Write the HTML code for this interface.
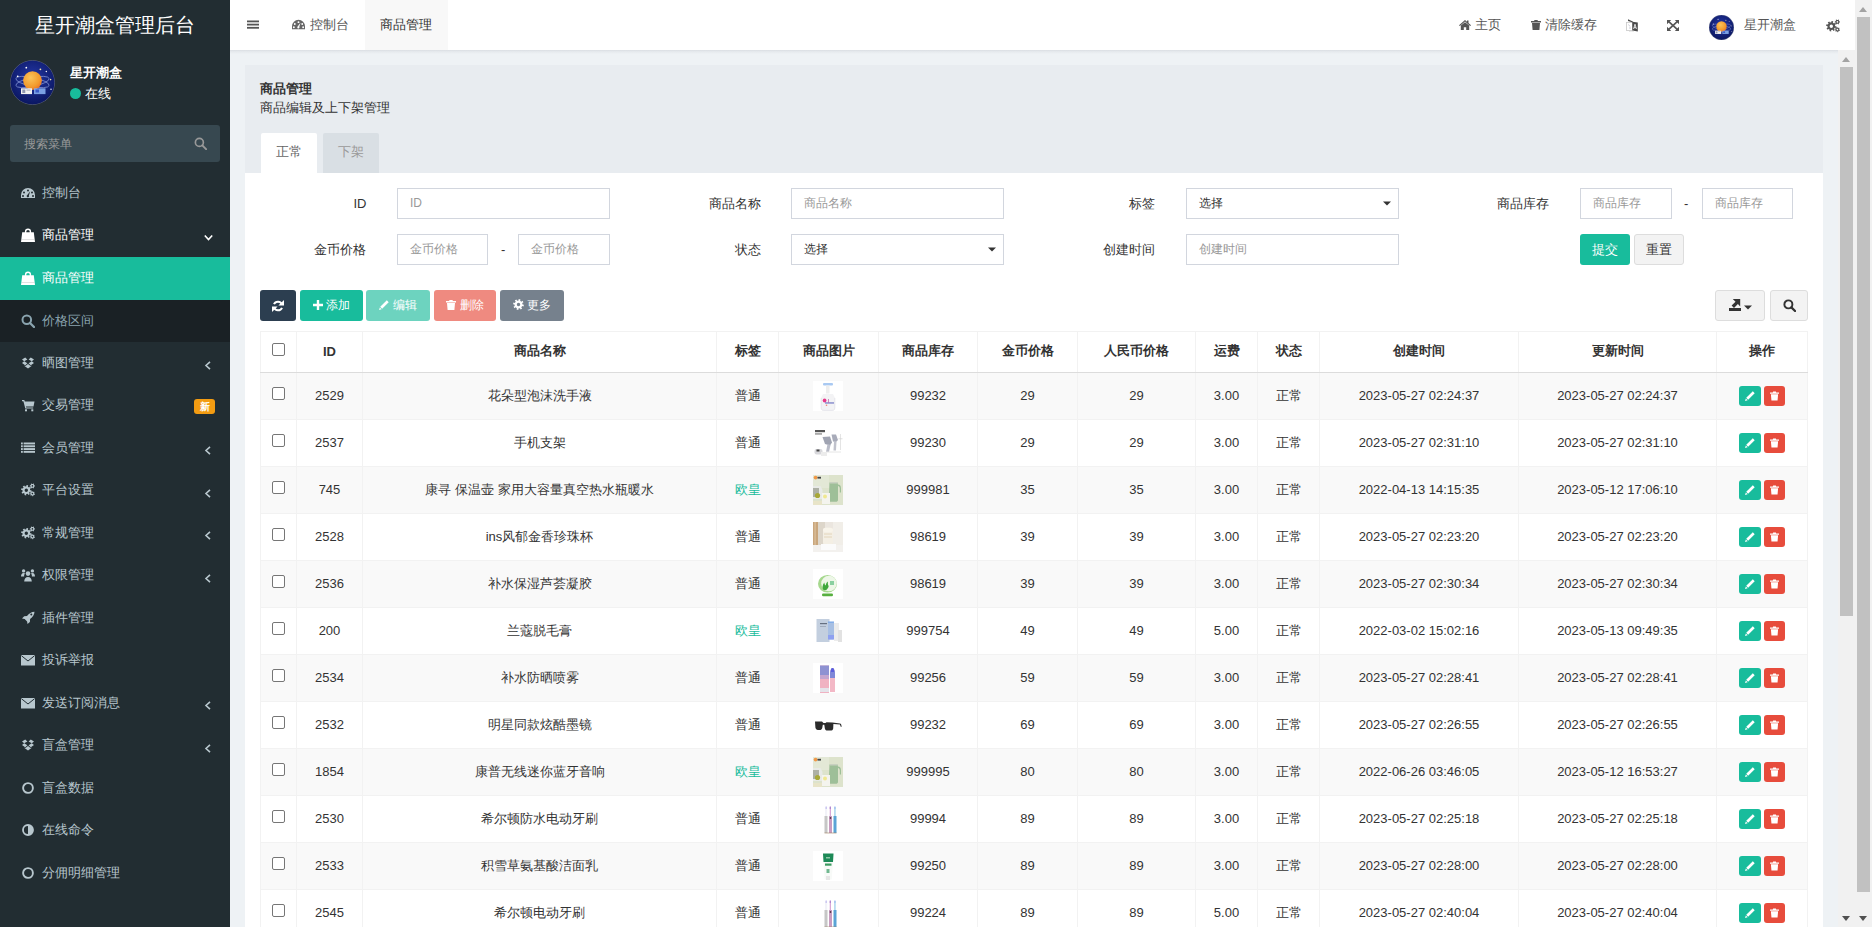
<!DOCTYPE html><html><head><meta charset="utf-8"><title>商品管理</title><style>
*{box-sizing:border-box;margin:0;padding:0}
html,body{width:1872px;height:927px;overflow:hidden}
body{font-family:"Liberation Sans",sans-serif;font-size:13px;color:#333;background:#ecf0f5;position:relative}
.abs{position:absolute}
svg{display:block}
/* sidebar */
#sb{position:absolute;left:0;top:0;width:230px;height:927px;background:#222d32;overflow:hidden}
#logo{position:absolute;left:0;top:0;width:230px;height:50px;line-height:50px;text-align:center;color:#fff;font-size:20px}
#avatar{position:absolute;left:10px;top:60px;width:45px;height:45px;border-radius:50%;overflow:hidden}
#uname{position:absolute;left:70px;top:63.5px;color:#fff;font-weight:bold;font-size:13px;line-height:18px}
#ustat{position:absolute;left:70px;top:85px;color:#fff;font-size:13px;line-height:18px}
#ustat i{display:inline-block;width:11px;height:11px;border-radius:50%;background:#18bc9c;vertical-align:-1px;margin-right:4px}
#sbsearch{position:absolute;left:10px;top:125px;width:210px;height:37px;background:#374850;border-radius:3px}
#sbsearch span{position:absolute;left:14px;top:1px;line-height:37px;font-size:12px;color:#9a9a9a}
.mi{position:absolute;left:0;width:230px;height:42.5px;color:#b8c7ce}
.mi .ic{position:absolute;left:21px;top:14px;width:14px;height:14px}
.mi .tx{position:absolute;left:42px;top:0;line-height:42.5px;font-size:13px;font-weight:500}
.mi .ar{position:absolute;left:204px;top:19.5px;width:8px;height:9px}
/* header */
#hd{position:absolute;left:230px;top:0;width:1625px;height:50px;background:#fff}
#hdsh{position:absolute;left:230px;top:50px;width:1608px;height:4px;background:linear-gradient(#d9dde2,rgba(217,221,226,.5) 30%,rgba(238,242,245,0))}
.hx{position:absolute;top:0;line-height:50px;font-size:13px;color:#555}
/* content */
#ct{position:absolute;left:230px;top:50px;width:1608px;height:877px;background:#eef2f5;overflow:hidden}
#panel{position:absolute;left:15px;top:15px;width:1578px;height:1000px;background:#fff}
#ph{position:absolute;left:0;top:0;width:1578px;height:108px;background:#e8ecf0}
.tab{position:absolute;top:68px;height:40px;width:56px;line-height:38px;text-align:center;border-radius:2px 2px 0 0}
.lbl{position:absolute;line-height:31px;text-align:right;color:#333;font-size:13px}
.inp{position:absolute;height:31px;border:1px solid #d2d6de;background:#fff;line-height:29px;padding-left:12px;font-size:12px;color:#999}
.dash{position:absolute;line-height:31px;color:#333}
.btn{position:absolute;height:31px;border-radius:3px;color:#fff;font-size:12px;line-height:31px;text-align:center;font-weight:500}
.btn svg{display:inline-block;vertical-align:-1px}
.btn .abs{line-height:0}
.btn .abs svg{display:block}
/* table */
#tbl{position:absolute;left:15px;top:266px;border-collapse:collapse;table-layout:fixed}
#tbl th,#tbl td{border:1px solid #f2f2f2;text-align:center;vertical-align:middle;padding:0;overflow:hidden;white-space:nowrap}
#tbl th{height:41px;padding-bottom:2px;font-weight:bold;color:#333;background:#fff;border-bottom:1px solid #dcdcdc}
#tbl td{height:47px;color:#333;padding-bottom:2px}
#tbl tr.s td{background:#f9f9f9}
.cb{display:inline-block;width:13px;height:13px;border:1px solid #767676;border-radius:2px;background:#fff;vertical-align:middle;position:relative;top:-3px}
#tbl td .cb{top:-3px}
.op{display:inline-block;width:22px;height:20px;border-radius:3px;vertical-align:middle;position:relative;top:1px}

.cj{position:relative;top:1px}
.thumb{display:inline-block;width:30px;height:30px;vertical-align:middle;position:relative;top:1px;left:-1px}
/* scrollbars */
.sbar{position:absolute;top:0;width:17px;background:#f1f1f1}
.sthumb{position:absolute;left:2px;width:13px;background:#c1c1c1}
</style></head><body><div id="sb"><div id="logo">星开潮盒管理后台</div><div id="avatar"><svg width="45" height="45" viewBox="0 0 45 45" ><defs><radialGradient id="ag45" cx="50%" cy="40%" r="60%"><stop offset="0" stop-color="#2538a8"/><stop offset="1" stop-color="#0a1660"/></radialGradient><radialGradient id="pg45" cx="40%" cy="35%" r="70%"><stop offset="0" stop-color="#fbc45a"/><stop offset=".7" stop-color="#f39a2c"/><stop offset="1" stop-color="#e8702a"/></radialGradient></defs>
<circle cx="22.5" cy="22.5" r="22.3" fill="url(#ag45)" stroke="#7a8090" stroke-width=".6"/>
<ellipse cx="22.5" cy="22" rx="17" ry="4.5" fill="none" stroke="#8a9ad8" stroke-width=".7" transform="rotate(-12 22.5 22)"/>
<ellipse cx="22.5" cy="22" rx="17" ry="4.5" fill="none" stroke="#8a9ad8" stroke-width=".7" transform="rotate(12 22.5 22)"/>
<circle cx="22.5" cy="20.6" r="9.4" fill="url(#pg45)"/>
<rect x="11" y="28.3" width="11" height="5.8" fill="#f2f2f2"/><rect x="12.3" y="29.5" width="3" height="3.5" fill="#9098b0"/><rect x="16.5" y="29.5" width="4" height="1.2" fill="#b0b4c4"/>
<rect x="24" y="28.3" width="11.5" height="5.8" fill="#86aef0" opacity=".9"/><rect x="25.5" y="29.5" width="3.5" height="3" fill="#3a5ac8"/>
<circle cx="16.3" cy="7.7" r=".9" fill="#fff"/><circle cx="30.4" cy="9.3" r=".9" fill="#f0e0a0"/><circle cx="36.3" cy="11.5" r=".7" fill="#fff"/><circle cx="7.7" cy="16.3" r=".9" fill="#fff"/><circle cx="40.6" cy="19.6" r=".8" fill="#f0e0a0"/><circle cx="41" cy="29.3" r=".7" fill="#fff"/></svg></div><div id="uname">星开潮盒</div><div id="ustat"><i></i>在线</div><div id="sbsearch"><span>搜索菜单</span><div class="abs" style="left:184px;top:12px"><svg width="13" height="13" viewBox="0 0 14 14" ><circle cx="5.8" cy="5.8" r="4.3" fill="none" stroke="#999" stroke-width="1.8"/><path d="M9 9l4 4" stroke="#999" stroke-width="2.1" stroke-linecap="round"/></svg></div></div><div class="mi" style="top:171.5px;color:#b8c7ce"><div class="ic"><svg width="14" height="14" viewBox="0 0 14 14" ><path fill="#b8c7ce" d="M7 2A7 7 0 0 0 0 9v3h14V9A7 7 0 0 0 7 2zM7 3.5a1 1 0 1 1 0 2 1 1 0 0 1 0-2zM3 5.5a1 1 0 1 1 0 2 1 1 0 0 1 0-2zM11 5.5a1 1 0 1 1 0 2 1 1 0 0 1 0-2zM2 9a1 1 0 1 1 0 2 1 1 0 0 1 0-2zM12 9a1 1 0 1 1 0 2 1 1 0 0 1 0-2zM9.2 5.2 7.9 9.4a1.2 1.2 0 1 1-1.6-.4z"/></svg></div><div class="tx">控制台</div></div><div class="mi" style="top:214.0px;color:#fff"><div class="ic"><svg width="14" height="14" viewBox="0 0 14 14" ><path fill="#fff" d="M1.2 4.3h11.6L14 14H0z"/><path fill="none" stroke="#fff" stroke-width="1.4" d="M4.6 6.5V3.6a2.4 2.4 0 0 1 4.8 0v2.9"/><path d="M.6 11.6h12.8" stroke="#999" stroke-width=".5" opacity=".6"/></svg></div><div class="tx">商品管理</div><div class="ar" style="left:204px;top:20px"><svg width="9" height="8" viewBox="0 0 9 8" ><path d="M0.8 1.5 4.5 5.5 8.2 1.5" fill="none" stroke="#fff" stroke-width="1.6"/></svg></div></div><div class="mi" style="top:256.5px;background:#18bc9c;height:43.5px;color:#fff"><div class="ic"><svg width="14" height="14" viewBox="0 0 14 14" ><path fill="#fff" d="M1.2 4.3h11.6L14 14H0z"/><path fill="none" stroke="#fff" stroke-width="1.4" d="M4.6 6.5V3.6a2.4 2.4 0 0 1 4.8 0v2.9"/><path d="M.6 11.6h12.8" stroke="#999" stroke-width=".5" opacity=".6"/></svg></div><div class="tx">商品管理</div></div><div class="mi" style="top:299.0px;background:#1a2125;top:300px;height:42px;color:#8aa4af"><div class="ic"><svg width="14" height="14" viewBox="0 0 14 14" ><circle cx="5.8" cy="5.8" r="4.3" fill="none" stroke="#8aa4af" stroke-width="2"/><path d="M9 9l4 4" stroke="#8aa4af" stroke-width="2.3" stroke-linecap="round"/></svg></div><div class="tx">价格区间</div></div><div class="mi" style="top:341.5px;color:#b8c7ce"><div class="ic"><svg width="14" height="14" viewBox="0 0 14 14" ><path fill="#b8c7ce" d="M4.2 1.5 1 3.6 3.2 5.3 6.4 3.4zM9.8 1.5 13 3.6 10.8 5.3 7.6 3.4zM1 7.1l3.2 2.1L6.4 7.3 3.2 5.3zM13 7.1l-3.2 2.1L7.6 7.3l3.2-2zM7 8l-2.6 2 -.9-.5v.6L7 12.5l3.5-2.4v-.6l-.9.5z"/></svg></div><div class="tx">晒图管理</div><div class="ar"><svg width="8" height="9" viewBox="0 0 8 9" ><path d="M6 0.8 2 4.5 6 8.2" fill="none" stroke="#b8c7ce" stroke-width="1.6"/></svg></div></div><div class="mi" style="top:384.0px;color:#b8c7ce"><div class="ic"><svg width="14" height="14" viewBox="0 0 14 14" ><path fill="#b8c7ce" d="M1 2h2.3l.5 1.4H13.5l-1 5H4.9l.3 1H12.2v1.2H4.3L2.4 3.2H1z"/><rect x="4" y="11.3" width="2" height="2" fill="#b8c7ce"/><rect x="10.3" y="11.3" width="2" height="2" fill="#b8c7ce"/></svg></div><div class="tx">交易管理</div><div class="abs" style="left:194px;top:14.5px;width:21px;height:15px;background:#f39c12;border-radius:3px;color:#fff;font-size:10px;font-weight:bold;line-height:15px;text-align:center">新</div></div><div class="mi" style="top:426.5px;color:#b8c7ce"><div class="ic"><svg width="14" height="14" viewBox="0 0 14 14" ><rect x="0" y="1.5" width="1.8" height="1.9" fill="#b8c7ce"/><rect x="2.6" y="1.5" width="11.4" height="1.9" fill="#b8c7ce"/><rect x="0" y="4.3" width="1.8" height="1.9" fill="#b8c7ce"/><rect x="2.6" y="4.3" width="11.4" height="1.9" fill="#b8c7ce"/><rect x="0" y="7.1" width="1.8" height="1.9" fill="#b8c7ce"/><rect x="2.6" y="7.1" width="11.4" height="1.9" fill="#b8c7ce"/><rect x="0" y="9.9" width="1.8" height="1.9" fill="#b8c7ce"/><rect x="2.6" y="9.9" width="11.4" height="1.9" fill="#b8c7ce"/></svg></div><div class="tx">会员管理</div><div class="ar"><svg width="8" height="9" viewBox="0 0 8 9" ><path d="M6 0.8 2 4.5 6 8.2" fill="none" stroke="#b8c7ce" stroke-width="1.6"/></svg></div></div><div class="mi" style="top:469.0px;color:#b8c7ce"><div class="ic"><svg width="14" height="14" viewBox="0 0 14 14" ><path fill="#b8c7ce" fill-rule="evenodd" d="M10.50 7.32 L10.14 9.11 L8.87 8.78 L7.99 10.02 L8.89 10.96 L7.37 11.97 L6.71 10.84 L5.21 11.10 L5.18 12.40 L3.39 12.04 L3.72 10.77 L2.48 9.89 L1.54 10.79 L0.53 9.27 L1.66 8.61 L1.40 7.11 L0.10 7.08 L0.46 5.29 L1.73 5.62 L2.61 4.38 L1.71 3.44 L3.23 2.43 L3.89 3.56 L5.39 3.30 L5.42 2.00 L7.21 2.36 L6.88 3.63 L8.12 4.51 L9.06 3.61 L10.07 5.13 L8.94 5.79 L9.20 7.29ZM7.00 7.20A1.7 1.7 0 1 0 3.60 7.20A1.7 1.7 0 1 0 7.00 7.20ZM13.93 2.29 L13.93 3.51 L13.22 3.44 L12.71 4.28 L13.19 4.79 L12.14 5.39 L11.84 4.75 L10.86 4.72 L10.66 5.39 L9.61 4.79 L10.02 4.21 L9.55 3.34 L8.87 3.51 L8.87 2.29 L9.58 2.36 L10.09 1.52 L9.61 1.01 L10.66 0.41 L10.96 1.05 L11.94 1.08 L12.14 0.41 L13.19 1.01 L12.78 1.59 L13.25 2.46ZM12.20 2.90A0.8 0.8 0 1 0 10.60 2.90A0.8 0.8 0 1 0 12.20 2.90ZM13.99 10.77 L13.64 11.93 L12.98 11.65 L12.24 12.30 L12.55 12.93 L11.37 13.20 L11.28 12.50 L10.35 12.18 L9.96 12.76 L9.13 11.87 L9.70 11.44 L9.50 10.48 L8.81 10.43 L9.16 9.27 L9.82 9.55 L10.56 8.90 L10.25 8.27 L11.43 8.00 L11.52 8.70 L12.45 9.02 L12.84 8.44 L13.67 9.33 L13.10 9.76 L13.30 10.72ZM12.20 10.60A0.8 0.8 0 1 0 10.60 10.60A0.8 0.8 0 1 0 12.20 10.60Z"/></svg></div><div class="tx">平台设置</div><div class="ar"><svg width="8" height="9" viewBox="0 0 8 9" ><path d="M6 0.8 2 4.5 6 8.2" fill="none" stroke="#b8c7ce" stroke-width="1.6"/></svg></div></div><div class="mi" style="top:511.5px;color:#b8c7ce"><div class="ic"><svg width="14" height="14" viewBox="0 0 14 14" ><path fill="#b8c7ce" fill-rule="evenodd" d="M10.50 7.32 L10.14 9.11 L8.87 8.78 L7.99 10.02 L8.89 10.96 L7.37 11.97 L6.71 10.84 L5.21 11.10 L5.18 12.40 L3.39 12.04 L3.72 10.77 L2.48 9.89 L1.54 10.79 L0.53 9.27 L1.66 8.61 L1.40 7.11 L0.10 7.08 L0.46 5.29 L1.73 5.62 L2.61 4.38 L1.71 3.44 L3.23 2.43 L3.89 3.56 L5.39 3.30 L5.42 2.00 L7.21 2.36 L6.88 3.63 L8.12 4.51 L9.06 3.61 L10.07 5.13 L8.94 5.79 L9.20 7.29ZM7.00 7.20A1.7 1.7 0 1 0 3.60 7.20A1.7 1.7 0 1 0 7.00 7.20ZM13.93 2.29 L13.93 3.51 L13.22 3.44 L12.71 4.28 L13.19 4.79 L12.14 5.39 L11.84 4.75 L10.86 4.72 L10.66 5.39 L9.61 4.79 L10.02 4.21 L9.55 3.34 L8.87 3.51 L8.87 2.29 L9.58 2.36 L10.09 1.52 L9.61 1.01 L10.66 0.41 L10.96 1.05 L11.94 1.08 L12.14 0.41 L13.19 1.01 L12.78 1.59 L13.25 2.46ZM12.20 2.90A0.8 0.8 0 1 0 10.60 2.90A0.8 0.8 0 1 0 12.20 2.90ZM13.99 10.77 L13.64 11.93 L12.98 11.65 L12.24 12.30 L12.55 12.93 L11.37 13.20 L11.28 12.50 L10.35 12.18 L9.96 12.76 L9.13 11.87 L9.70 11.44 L9.50 10.48 L8.81 10.43 L9.16 9.27 L9.82 9.55 L10.56 8.90 L10.25 8.27 L11.43 8.00 L11.52 8.70 L12.45 9.02 L12.84 8.44 L13.67 9.33 L13.10 9.76 L13.30 10.72ZM12.20 10.60A0.8 0.8 0 1 0 10.60 10.60A0.8 0.8 0 1 0 12.20 10.60Z"/></svg></div><div class="tx">常规管理</div><div class="ar"><svg width="8" height="9" viewBox="0 0 8 9" ><path d="M6 0.8 2 4.5 6 8.2" fill="none" stroke="#b8c7ce" stroke-width="1.6"/></svg></div></div><div class="mi" style="top:554.0px;color:#b8c7ce"><div class="ic"><svg width="14" height="14" viewBox="0 0 14 14" ><circle cx="7" cy="5.6" r="2.3" fill="#b8c7ce"/><path fill="#b8c7ce" d="M3.2 13.5c0-2.9 1.5-4.6 3.8-4.6s3.8 1.7 3.8 4.6z"/><circle cx="2.6" cy="2.9" r="1.7" fill="#b8c7ce"/><circle cx="11.4" cy="2.9" r="1.7" fill="#b8c7ce"/><path fill="#b8c7ce" d="M0 8.6c0-2 .8-3.6 2.6-3.6.6 0 1.1.2 1.5.5-.6.5-1 1.3-1 2.3 0 .3 0 .6.1.8z M14 8.6c0-2-.8-3.6-2.6-3.6-.6 0-1.1.2-1.5.5.6.5 1 1.3 1 2.3 0 .3 0 .6-.1.8z"/></svg></div><div class="tx">权限管理</div><div class="ar"><svg width="8" height="9" viewBox="0 0 8 9" ><path d="M6 0.8 2 4.5 6 8.2" fill="none" stroke="#b8c7ce" stroke-width="1.6"/></svg></div></div><div class="mi" style="top:596.5px;color:#b8c7ce"><div class="ic"><svg width="14" height="14" viewBox="0 0 14 14" ><path fill="#b8c7ce" d="M13.5.8C10.5.9 8 2.4 6 5L3.2 5.2 1 7.6l2.7.4 2.4 2.4.4 2.7 2.4-2.2.2-2.8c2.6-2 4.3-4.6 4.4-7.3zM10.3 2.6a1 1 0 1 1 0 2 1 1 0 0 1 0-2z"/></svg></div><div class="tx">插件管理</div></div><div class="mi" style="top:639.0px;color:#b8c7ce"><div class="ic"><svg width="14" height="14" viewBox="0 0 14 14" ><rect x="0" y="2" width="14" height="10.5" fill="#b8c7ce"/><path d="M0.3 2.6 7 8 13.7 2.6" fill="none" stroke="#222d32" stroke-width="1"/></svg></div><div class="tx">投诉举报</div></div><div class="mi" style="top:681.5px;color:#b8c7ce"><div class="ic"><svg width="14" height="14" viewBox="0 0 14 14" ><rect x="0" y="2" width="14" height="10.5" fill="#b8c7ce"/><path d="M0.3 2.6 7 8 13.7 2.6" fill="none" stroke="#222d32" stroke-width="1"/></svg></div><div class="tx">发送订阅消息</div><div class="ar"><svg width="8" height="9" viewBox="0 0 8 9" ><path d="M6 0.8 2 4.5 6 8.2" fill="none" stroke="#b8c7ce" stroke-width="1.6"/></svg></div></div><div class="mi" style="top:724.0px;color:#b8c7ce"><div class="ic"><svg width="14" height="14" viewBox="0 0 14 14" ><path fill="#b8c7ce" d="M4.2 1.5 1 3.6 3.2 5.3 6.4 3.4zM9.8 1.5 13 3.6 10.8 5.3 7.6 3.4zM1 7.1l3.2 2.1L6.4 7.3 3.2 5.3zM13 7.1l-3.2 2.1L7.6 7.3l3.2-2zM7 8l-2.6 2 -.9-.5v.6L7 12.5l3.5-2.4v-.6l-.9.5z"/></svg></div><div class="tx">盲盒管理</div><div class="ar"><svg width="8" height="9" viewBox="0 0 8 9" ><path d="M6 0.8 2 4.5 6 8.2" fill="none" stroke="#b8c7ce" stroke-width="1.6"/></svg></div></div><div class="mi" style="top:766.5px;color:#b8c7ce"><div class="ic"><svg width="14" height="14" viewBox="0 0 14 14" ><circle cx="7" cy="7" r="4.9" fill="none" stroke="#b8c7ce" stroke-width="1.9"/></svg></div><div class="tx">盲盒数据</div></div><div class="mi" style="top:809.0px;color:#b8c7ce"><div class="ic"><svg width="14" height="14" viewBox="0 0 14 14" ><circle cx="7" cy="7" r="5" fill="none" stroke="#b8c7ce" stroke-width="1.8"/><path fill="#b8c7ce" d="M7 2a5 5 0 0 1 0 10z"/></svg></div><div class="tx">在线命令</div></div><div class="mi" style="top:851.5px;color:#b8c7ce"><div class="ic"><svg width="14" height="14" viewBox="0 0 14 14" ><circle cx="7" cy="7" r="4.9" fill="none" stroke="#b8c7ce" stroke-width="1.9"/></svg></div><div class="tx">分佣明细管理</div></div></div><div id="hd"><div class="abs" style="left:17px;top:20px"><svg width="12" height="9" viewBox="0 0 12 9" ><rect y="0.5" width="12" height="1.8" fill="#555"/><rect y="3.7" width="12" height="1.8" fill="#555"/><rect y="6.9" width="12" height="1.8" fill="#555"/></svg></div><div class="abs" style="left:62px;top:18px"><svg width="13" height="13" viewBox="0 0 14 14" ><path fill="#666" d="M7 2A7 7 0 0 0 0 9v3h14V9A7 7 0 0 0 7 2zM7 3.5a1 1 0 1 1 0 2 1 1 0 0 1 0-2zM3 5.5a1 1 0 1 1 0 2 1 1 0 0 1 0-2zM11 5.5a1 1 0 1 1 0 2 1 1 0 0 1 0-2zM2 9a1 1 0 1 1 0 2 1 1 0 0 1 0-2zM12 9a1 1 0 1 1 0 2 1 1 0 0 1 0-2zM9.2 5.2 7.9 9.4a1.2 1.2 0 1 1-1.6-.4z"/></svg></div><div class="hx" style="left:80px;color:#555">控制台</div><div class="abs" style="left:135px;top:0;width:83px;height:50px;background:#f8f8f8"></div><div class="hx" style="left:150px;color:#333">商品管理</div><div class="abs" style="left:1229px;top:20px"><svg width="12" height="10" viewBox="0 0 12 10" ><path fill="#555" d="M6 0 0 5.2l.8.8L6 1.6 11.2 6l.8-.8L9.5 3V.5H8v1.3z M1.8 5.6V10h3V7.2h2.4V10h3V5.6L6 2.2z"/></svg></div><div class="hx" style="left:1245px">主页</div><div class="abs" style="left:1301px;top:20px"><svg width="10" height="10" viewBox="0 0 10 10" ><path fill="#555" d="M3.5 0h3l.4 1H10v1.4H0V1h3.1zM1 3h8l-.6 7H1.6z"/><path stroke="#fff" stroke-width=".7" opacity=".0" d="M3.5 4.5v4M6.5 4.5v4"/></svg></div><div class="hx" style="left:1315px">清除缓存</div><div class="abs" style="left:1396px;top:19px"><svg width="12" height="13" viewBox="0 0 12 13" ><rect x="0.5" y="3.5" width="6" height="8" fill="#fff" stroke="#c8c8c8" stroke-width=".8"/><path d="M2 .3 6.8 2.6V3.6L2 2z" fill="#4a4a4a"/><path d="M6.3 2.8 11.8 3.6V12.4L6.3 11.4z" fill="#4a4a4a"/><path d="M7.6 10 9 5.2 10.4 10M8.1 8.6h1.8" fill="none" stroke="#fff" stroke-width=".8"/><path d="M2.5 5.5 4 7.5M3 9h2" stroke="#aab" stroke-width=".6"/><path d="M3 12.5c1.5.5 3.5.5 5-.5" fill="none" stroke="#ccc" stroke-width=".6"/></svg></div><div class="abs" style="left:1437px;top:20px"><svg width="12" height="11" viewBox="0 0 12 11" ><path fill="#555" d="M0 0h4.2L0 4.2zM12 0v4.2L7.8 0zM0 11V6.8L4.2 11zM12 11H7.8L12 6.8z"/><path d="M1.2 1.1 10.8 9.9M10.8 1.1 1.2 9.9" stroke="#555" stroke-width="1.7"/></svg></div><div class="abs" style="left:1479px;top:15px;width:25px;height:25px"><svg width="25" height="25" viewBox="0 0 45 45" ><defs><radialGradient id="ag25" cx="50%" cy="40%" r="60%"><stop offset="0" stop-color="#2538a8"/><stop offset="1" stop-color="#0a1660"/></radialGradient><radialGradient id="pg25" cx="40%" cy="35%" r="70%"><stop offset="0" stop-color="#fbc45a"/><stop offset=".7" stop-color="#f39a2c"/><stop offset="1" stop-color="#e8702a"/></radialGradient></defs>
<circle cx="22.5" cy="22.5" r="22.3" fill="url(#ag25)" stroke="#7a8090" stroke-width=".6"/>
<ellipse cx="22.5" cy="22" rx="17" ry="4.5" fill="none" stroke="#8a9ad8" stroke-width=".7" transform="rotate(-12 22.5 22)"/>
<ellipse cx="22.5" cy="22" rx="17" ry="4.5" fill="none" stroke="#8a9ad8" stroke-width=".7" transform="rotate(12 22.5 22)"/>
<circle cx="22.5" cy="20.6" r="9.4" fill="url(#pg25)"/>
<rect x="11" y="28.3" width="11" height="5.8" fill="#f2f2f2"/><rect x="12.3" y="29.5" width="3" height="3.5" fill="#9098b0"/><rect x="16.5" y="29.5" width="4" height="1.2" fill="#b0b4c4"/>
<rect x="24" y="28.3" width="11.5" height="5.8" fill="#86aef0" opacity=".9"/><rect x="25.5" y="29.5" width="3.5" height="3" fill="#3a5ac8"/>
<circle cx="16.3" cy="7.7" r=".9" fill="#fff"/><circle cx="30.4" cy="9.3" r=".9" fill="#f0e0a0"/><circle cx="36.3" cy="11.5" r=".7" fill="#fff"/><circle cx="7.7" cy="16.3" r=".9" fill="#fff"/><circle cx="40.6" cy="19.6" r=".8" fill="#f0e0a0"/><circle cx="41" cy="29.3" r=".7" fill="#fff"/></svg></div><div class="hx" style="left:1514px">星开潮盒</div><div class="abs" style="left:1596px;top:19px"><svg width="14" height="14" viewBox="0 0 14 14" ><path fill="#555" fill-rule="evenodd" d="M10.50 7.32 L10.14 9.11 L8.87 8.78 L7.99 10.02 L8.89 10.96 L7.37 11.97 L6.71 10.84 L5.21 11.10 L5.18 12.40 L3.39 12.04 L3.72 10.77 L2.48 9.89 L1.54 10.79 L0.53 9.27 L1.66 8.61 L1.40 7.11 L0.10 7.08 L0.46 5.29 L1.73 5.62 L2.61 4.38 L1.71 3.44 L3.23 2.43 L3.89 3.56 L5.39 3.30 L5.42 2.00 L7.21 2.36 L6.88 3.63 L8.12 4.51 L9.06 3.61 L10.07 5.13 L8.94 5.79 L9.20 7.29ZM7.00 7.20A1.7 1.7 0 1 0 3.60 7.20A1.7 1.7 0 1 0 7.00 7.20ZM13.93 2.29 L13.93 3.51 L13.22 3.44 L12.71 4.28 L13.19 4.79 L12.14 5.39 L11.84 4.75 L10.86 4.72 L10.66 5.39 L9.61 4.79 L10.02 4.21 L9.55 3.34 L8.87 3.51 L8.87 2.29 L9.58 2.36 L10.09 1.52 L9.61 1.01 L10.66 0.41 L10.96 1.05 L11.94 1.08 L12.14 0.41 L13.19 1.01 L12.78 1.59 L13.25 2.46ZM12.20 2.90A0.8 0.8 0 1 0 10.60 2.90A0.8 0.8 0 1 0 12.20 2.90ZM13.99 10.77 L13.64 11.93 L12.98 11.65 L12.24 12.30 L12.55 12.93 L11.37 13.20 L11.28 12.50 L10.35 12.18 L9.96 12.76 L9.13 11.87 L9.70 11.44 L9.50 10.48 L8.81 10.43 L9.16 9.27 L9.82 9.55 L10.56 8.90 L10.25 8.27 L11.43 8.00 L11.52 8.70 L12.45 9.02 L12.84 8.44 L13.67 9.33 L13.10 9.76 L13.30 10.72ZM12.20 10.60A0.8 0.8 0 1 0 10.60 10.60A0.8 0.8 0 1 0 12.20 10.60Z"/></svg></div></div><div id="ct"><div id="panel"><div id="ph"><div class="abs" style="left:15px;top:15px;font-weight:bold;line-height:18px">商品管理</div><div class="abs" style="left:15px;top:33.5px;line-height:18px">商品编辑及上下架管理</div><div class="tab" style="left:16px;background:#fff;color:#666">正常</div><div class="tab" style="left:78px;background:#d9dfe4;color:#999">下架</div></div><div class="lbl" style="left:15.0px;top:123px;width:106.4px">ID</div><div class="inp" style="left:152px;top:123px;width:213px;color:#999">ID</div><div class="lbl" style="left:15.0px;top:169px;width:106.4px">金币价格</div><div class="inp" style="left:152px;top:169px;width:91px;color:#999">金币价格</div><div class="dash" style="left:256px;top:169px">-</div><div class="inp" style="left:273px;top:169px;width:92px;color:#999">金币价格</div><div class="lbl" style="left:409.25px;top:123px;width:106.4px">商品名称</div><div class="inp" style="left:546px;top:123px;width:213px;color:#999">商品名称</div><div class="lbl" style="left:409.25px;top:169px;width:106.4px">状态</div><div class="inp" style="left:546px;top:169px;width:213px;color:#333">选择<div class="abs" style="right:7px;top:12px;line-height:0"><svg width="8" height="5" viewBox="0 0 8 5" ><path d="M0 0.5h8L4 4.5z" fill="#333"/></svg></div></div><div class="lbl" style="left:803.5px;top:123px;width:106.4px">标签</div><div class="inp" style="left:941px;top:123px;width:213px;color:#333">选择<div class="abs" style="right:7px;top:12px;line-height:0"><svg width="8" height="5" viewBox="0 0 8 5" ><path d="M0 0.5h8L4 4.5z" fill="#333"/></svg></div></div><div class="lbl" style="left:803.5px;top:169px;width:106.4px">创建时间</div><div class="inp" style="left:941px;top:169px;width:213px;color:#999">创建时间</div><div class="lbl" style="left:1197.75px;top:123px;width:106.4px">商品库存</div><div class="inp" style="left:1335px;top:123px;width:92px;color:#999">商品库存</div><div class="dash" style="left:1439px;top:123px">-</div><div class="inp" style="left:1457px;top:123px;width:91px;color:#999">商品库存</div><div class="btn" style="left:1335px;top:169px;width:50px;background:#18bc9c;font-size:13px">提交</div><div class="btn" style="left:1389px;top:169px;width:50px;background:#f3f3f3;border:1px solid #ddd;color:#333;font-size:13px;line-height:29px">重置</div><div class="btn" style="left:15px;top:225px;width:36px;background:#2c3e50"><div class="abs" style="left:12px;top:10px"><svg width="12" height="12" viewBox="0 0 12 12" ><path fill="none" stroke="#fff" stroke-width="2" d="M10 4.6A4.3 4.3 0 0 0 2 4.2M2 7.4A4.3 4.3 0 0 0 10 7.8"/><path fill="#fff" d="M12 0v5.6H6.4zM0 12V6.4h5.6z"/></svg></div></div><div class="btn" style="left:55px;top:225px;width:63px;background:#18bc9c"><svg width="10" height="10" viewBox="0 0 10 10" ><path fill="#fff" d="M3.8 0h2.4v3.8H10v2.4H6.2V10H3.8V6.2H0V3.8h3.8z"/></svg> 添加</div><div class="btn" style="left:121px;top:225px;width:64px;background:#6dd3bf"><svg width="10" height="10" viewBox="0 0 10.5 10.5" ><path fill="#fff" d="M8.2.3 10.2 2.3 3.3 9.2 1.3 7.2zM.9 7.8l1.9 1.9L0 10.5z"/></svg> 编辑</div><div class="btn" style="left:189px;top:225px;width:62px;background:#ef8a80"><svg width="10" height="10" viewBox="0 0 10 10" ><path fill="#fff" d="M3.5 0h3l.4 1H10v1.4H0V1h3.1zM1 3h8l-.6 7H1.6z"/><path stroke="#fff" stroke-width=".7" opacity=".0" d="M3.5 4.5v4M6.5 4.5v4"/></svg> 删除</div><div class="btn" style="left:255px;top:225px;width:64px;background:#76818d"><svg width="11" height="11" viewBox="0 0 11 11" ><path fill="#fff" fill-rule="evenodd" d="M10.90 5.63 L10.52 7.49 L9.16 7.12 L8.26 8.39 L9.23 9.41 L7.65 10.46 L6.94 9.23 L5.41 9.50 L5.37 10.90 L3.51 10.52 L3.88 9.16 L2.61 8.26 L1.59 9.23 L0.54 7.65 L1.77 6.94 L1.50 5.41 L0.10 5.37 L0.48 3.51 L1.84 3.88 L2.74 2.61 L1.77 1.59 L3.35 0.54 L4.06 1.77 L5.59 1.50 L5.63 0.10 L7.49 0.48 L7.12 1.84 L8.39 2.74 L9.41 1.77 L10.46 3.35 L9.23 4.06 L9.50 5.59ZM7.20 5.50A1.7 1.7 0 1 0 3.80 5.50A1.7 1.7 0 1 0 7.20 5.50Z"/></svg> 更多</div><div class="btn" style="left:1470px;top:225px;width:50px;background:#f3f3f3;border:1px solid #ddd"><div class="abs" style="left:13px;top:8px"><svg width="12" height="12" viewBox="0 0 12 12" ><path fill="#333" d="M0 9h12v3H0z"/><path fill="#333" d="M3.8 0H11.2V7.4L8.9 5.1 5 9 2.6 6.6 6.5 2.7z"/></svg></div><div class="abs" style="left:28px;top:14px;line-height:0"><svg width="8" height="5" viewBox="0 0 8 5" ><path d="M0 0.5h8L4 4.5z" fill="#333"/></svg></div></div><div class="btn" style="left:1525px;top:225px;width:38px;background:#f3f3f3;border:1px solid #ddd"><div class="abs" style="left:12px;top:8px"><svg width="13" height="13" viewBox="0 0 14 14" ><circle cx="5.8" cy="5.8" r="4.3" fill="none" stroke="#333" stroke-width="2.1"/><path d="M9 9l4 4" stroke="#333" stroke-width="2.4" stroke-linecap="round"/></svg></div></div><table id="tbl" style="left:15px;top:266px;width:1547px"><colgroup><col style="width:36px"><col style="width:66px"><col style="width:354px"><col style="width:62px"><col style="width:100px"><col style="width:99px"><col style="width:100px"><col style="width:118px"><col style="width:62px"><col style="width:62px"><col style="width:199px"><col style="width:198px"><col style="width:91px"></colgroup><tr><th><span class="cb"></span></th><th>ID</th><th>商品名称</th><th>标签</th><th>商品图片</th><th>商品库存</th><th>金币价格</th><th>人民币价格</th><th>运费</th><th>状态</th><th>创建时间</th><th>更新时间</th><th>操作</th></tr><tr class="s"><td><span class="cb"></span></td><td>2529</td><td><span class="cj">花朵型泡沫洗手液</span></td><td><span class="cj" style="color:#333">普通</span></td><td><span class="thumb"><svg width="30" height="30" viewBox="0 0 30 30" ><rect width="30" height="30" fill="#fff"/><rect x="10" y="2" width="10" height="2.6" rx="1" fill="#a9c9f2"/><rect x="13" y="4.5" width="3.5" height="8" fill="#eeeeee"/><path d="M10 13h10l2 4v10c0 1.5-1 2.5-2.5 2.5h-9C9 29.5 8 28.5 8 27V17z" fill="#f3f3f5"/><path d="M8.2 17v10c0 1.4 1 2.4 2.3 2.4h9c1.4 0 2.3-1 2.3-2.4V17" fill="none" stroke="#e2e2e8" stroke-width=".8"/><circle cx="11.6" cy="19.5" r="1.9" fill="#e63a8c"/><rect x="12" y="21.3" width="9" height="1.3" fill="#7b80c8"/><rect x="15" y="18" width=".8" height="4" fill="#c070b0"/><circle cx="13.5" cy="24.3" r=".8" fill="#f08070"/></svg></span></td><td>99232</td><td>29</td><td>29</td><td>3.00</td><td><span class="cj">正常</span></td><td>2023-05-27 02:24:37</td><td>2023-05-27 02:24:37</td><td><span class="op" style="background:#18bc9c"><span class="abs" style="left:6px;top:5px;line-height:0"><svg width="10" height="10" viewBox="0 0 10.5 10.5" ><path fill="#fff" d="M8.2.3 10.2 2.3 3.3 9.2 1.3 7.2zM.9 7.8l1.9 1.9L0 10.5z"/></svg></span></span> <span class="op" style="background:#e74c3c;width:21px;margin-left:-1px"><span class="abs" style="left:6px;top:5px;line-height:0"><svg width="9" height="10" viewBox="0 0 10 10" ><path fill="#fff" d="M3.5 0h3l.4 1H10v1.4H0V1h3.1zM1 3h8l-.6 7H1.6z"/><path stroke="#fff" stroke-width=".7" opacity=".0" d="M3.5 4.5v4M6.5 4.5v4"/></svg></span></span></td></tr><tr><td><span class="cb"></span></td><td>2537</td><td><span class="cj">手机支架</span></td><td><span class="cj" style="color:#333">普通</span></td><td><span class="thumb"><svg width="30" height="30" viewBox="0 0 30 30" ><rect width="30" height="30" fill="#fff"/><rect x="2" y="2" width="10" height="2.2" fill="#555"/><rect x="2" y="5" width="7" height="1.8" fill="#aaa"/><path d="M9.5 9 17 8.5 19 14.5 17 17.5 12 16z" fill="#a0a4b2"/><path d="M14.5 16 13 24h3l1.5-7z" fill="#b9bcc8"/><path d="M18.5 6.5 23 6.5 25 12 23 14 20 13.5z" fill="#a8abb9"/><path d="M21 13.5 20.5 22.5h2.5l.5-9z" fill="#c0c2cc"/><rect x="27.3" y="6" width=".7" height="16" fill="#d8d8d8"/><rect x="25.5" y="10.5" width="4" height=".7" fill="#d0d0d0"/><path d="M13 24h15" stroke="#e6e6e6" stroke-width="1"/><rect x="1.5" y="21" width="8" height="5.5" rx="2" fill="#d8d8dc"/><rect x="3.5" y="21.5" width="3" height="2" fill="#444"/><rect x="8" y="24" width="6" height="4" fill="#ececec"/></svg></span></td><td>99230</td><td>29</td><td>29</td><td>3.00</td><td><span class="cj">正常</span></td><td>2023-05-27 02:31:10</td><td>2023-05-27 02:31:10</td><td><span class="op" style="background:#18bc9c"><span class="abs" style="left:6px;top:5px;line-height:0"><svg width="10" height="10" viewBox="0 0 10.5 10.5" ><path fill="#fff" d="M8.2.3 10.2 2.3 3.3 9.2 1.3 7.2zM.9 7.8l1.9 1.9L0 10.5z"/></svg></span></span> <span class="op" style="background:#e74c3c;width:21px;margin-left:-1px"><span class="abs" style="left:6px;top:5px;line-height:0"><svg width="9" height="10" viewBox="0 0 10 10" ><path fill="#fff" d="M3.5 0h3l.4 1H10v1.4H0V1h3.1zM1 3h8l-.6 7H1.6z"/><path stroke="#fff" stroke-width=".7" opacity=".0" d="M3.5 4.5v4M6.5 4.5v4"/></svg></span></span></td></tr><tr class="s"><td><span class="cb"></span></td><td>745</td><td><span class="cj">康寻 保温壶 家用大容量真空热水瓶暖水</span></td><td><span class="cj" style="color:#18bc9c">欧皇</span></td><td><span class="thumb"><svg width="30" height="30" viewBox="0 0 30 30" ><rect width="30" height="30" fill="#dde3cc"/><rect x="0" y="0" width="16" height="13" fill="#e3e8d6"/><circle cx="2.6" cy="2.6" r="1.9" fill="#f09848"/><rect x="4.5" y="1.8" width="3.5" height="1.8" fill="#444"/><path d="M16.5 7.5h8l.5 2c2 0 3 1.5 3 4v4h-1.2v-4c0-1.5-.8-2.5-1.8-2.5V25c0 1-1 1.8-2 1.8h-5.5c-1 0-1.8-.8-1.8-1.8z" fill="#9ebf98"/><rect x="17" y="7" width="7.5" height="1.5" fill="#c8d0c0"/><path d="M0 11h7.5l2 4v9H0z" fill="#e8eae6"/><path d="M0 13h6v9H0z" fill="#7c8070" opacity=".55"/><circle cx="4.5" cy="20.5" r="2.6" fill="#a8a838"/><rect x="9" y="18" width="8" height="11" fill="#f4f4ee"/><circle cx="12" cy="21.5" r="2" fill="#f0e890"/><rect x="0" y="26" width="9" height="4" fill="#e8e4c8"/></svg></span></td><td>999981</td><td>35</td><td>35</td><td>3.00</td><td><span class="cj">正常</span></td><td>2022-04-13 14:15:35</td><td>2023-05-12 17:06:10</td><td><span class="op" style="background:#18bc9c"><span class="abs" style="left:6px;top:5px;line-height:0"><svg width="10" height="10" viewBox="0 0 10.5 10.5" ><path fill="#fff" d="M8.2.3 10.2 2.3 3.3 9.2 1.3 7.2zM.9 7.8l1.9 1.9L0 10.5z"/></svg></span></span> <span class="op" style="background:#e74c3c;width:21px;margin-left:-1px"><span class="abs" style="left:6px;top:5px;line-height:0"><svg width="9" height="10" viewBox="0 0 10 10" ><path fill="#fff" d="M3.5 0h3l.4 1H10v1.4H0V1h3.1zM1 3h8l-.6 7H1.6z"/><path stroke="#fff" stroke-width=".7" opacity=".0" d="M3.5 4.5v4M6.5 4.5v4"/></svg></span></span></td></tr><tr><td><span class="cb"></span></td><td>2528</td><td><span class="cj">ins风郁金香珍珠杯</span></td><td><span class="cj" style="color:#333">普通</span></td><td><span class="thumb"><svg width="30" height="30" viewBox="0 0 30 30" ><rect width="30" height="30" fill="#ebe6df"/><rect x="0" y="0" width="5" height="23" fill="#c9a67c"/><rect x="1.5" y="0" width="1.2" height="23" fill="#dcc09c"/><rect x="5" y="0" width="7" height="23" fill="#ddd6ca"/><rect x="20" y="0" width="10" height="30" fill="#f1eee8"/><path d="M10 8c0-2 2-2.5 5-2.5s5 .5 5 2.5v13c0 2-2 3-5 3s-5-1-5-3z" fill="#f4efe4"/><rect x="10" y="6" width="10" height="4" rx="2" fill="#f8f4ea"/><path d="M11 12h8M11 15h8" stroke="#e0cfb0" stroke-width=".8"/><rect x="0" y="23" width="30" height="7" fill="#f3f1ee"/><rect x="8" y="22" width="15" height="6" fill="#fbfbfb"/></svg></span></td><td>98619</td><td>39</td><td>39</td><td>3.00</td><td><span class="cj">正常</span></td><td>2023-05-27 02:23:20</td><td>2023-05-27 02:23:20</td><td><span class="op" style="background:#18bc9c"><span class="abs" style="left:6px;top:5px;line-height:0"><svg width="10" height="10" viewBox="0 0 10.5 10.5" ><path fill="#fff" d="M8.2.3 10.2 2.3 3.3 9.2 1.3 7.2zM.9 7.8l1.9 1.9L0 10.5z"/></svg></span></span> <span class="op" style="background:#e74c3c;width:21px;margin-left:-1px"><span class="abs" style="left:6px;top:5px;line-height:0"><svg width="9" height="10" viewBox="0 0 10 10" ><path fill="#fff" d="M3.5 0h3l.4 1H10v1.4H0V1h3.1zM1 3h8l-.6 7H1.6z"/><path stroke="#fff" stroke-width=".7" opacity=".0" d="M3.5 4.5v4M6.5 4.5v4"/></svg></span></span></td></tr><tr class="s"><td><span class="cb"></span></td><td>2536</td><td><span class="cj">补水保湿芦荟凝胶</span></td><td><span class="cj" style="color:#333">普通</span></td><td><span class="thumb"><svg width="30" height="30" viewBox="0 0 30 30" ><rect width="30" height="30" fill="#fff"/><ellipse cx="14.5" cy="14.8" rx="9.5" ry="8.8" fill="#a6d88e"/><circle cx="16" cy="14.5" r="7.8" fill="#eef7e8"/><path d="M10.5 21c-1.5-2-1.2-5 .8-7.5.2 1.5.6 2.5 1.4 3 .3-1.8 1-3.2 2.2-4-.2 2 0 3.5.8 4.6-.4 2-1.6 3.5-2.6 4z" fill="#3fa83c"/><rect x="17" y="12" width="4" height="4" fill="#8ad0a0"/><rect x="9" y="24.5" width="11" height="2.8" rx="1.2" fill="#58b040"/></svg></span></td><td>98619</td><td>39</td><td>39</td><td>3.00</td><td><span class="cj">正常</span></td><td>2023-05-27 02:30:34</td><td>2023-05-27 02:30:34</td><td><span class="op" style="background:#18bc9c"><span class="abs" style="left:6px;top:5px;line-height:0"><svg width="10" height="10" viewBox="0 0 10.5 10.5" ><path fill="#fff" d="M8.2.3 10.2 2.3 3.3 9.2 1.3 7.2zM.9 7.8l1.9 1.9L0 10.5z"/></svg></span></span> <span class="op" style="background:#e74c3c;width:21px;margin-left:-1px"><span class="abs" style="left:6px;top:5px;line-height:0"><svg width="9" height="10" viewBox="0 0 10 10" ><path fill="#fff" d="M3.5 0h3l.4 1H10v1.4H0V1h3.1zM1 3h8l-.6 7H1.6z"/><path stroke="#fff" stroke-width=".7" opacity=".0" d="M3.5 4.5v4M6.5 4.5v4"/></svg></span></span></td></tr><tr><td><span class="cb"></span></td><td>200</td><td><span class="cj">兰蔻脱毛膏</span></td><td><span class="cj" style="color:#18bc9c">欧皇</span></td><td><span class="thumb"><svg width="30" height="30" viewBox="0 0 30 30" ><rect width="30" height="30" fill="#fff"/><rect x="3.5" y="3" width="13" height="23" fill="#c3cfdf"/><rect x="7" y="7" width="7" height="1.2" fill="#667080"/><rect x="7" y="10" width="6" height=".8" fill="#9aa4b4"/><rect x="15" y="6" width="6" height="17.5" rx="1" fill="#a7bfe3"/><rect x="15" y="19" width="6" height="4.5" fill="#8ea0f0"/><rect x="15" y="5.5" width="6" height="1.3" fill="#7aa8e8"/><rect x="21" y="7" width="5" height="18" fill="#ececec"/><rect x="25" y="14" width="4" height="12" fill="#e2e2e2"/></svg></span></td><td>999754</td><td>49</td><td>49</td><td>5.00</td><td><span class="cj">正常</span></td><td>2022-03-02 15:02:16</td><td>2023-05-13 09:49:35</td><td><span class="op" style="background:#18bc9c"><span class="abs" style="left:6px;top:5px;line-height:0"><svg width="10" height="10" viewBox="0 0 10.5 10.5" ><path fill="#fff" d="M8.2.3 10.2 2.3 3.3 9.2 1.3 7.2zM.9 7.8l1.9 1.9L0 10.5z"/></svg></span></span> <span class="op" style="background:#e74c3c;width:21px;margin-left:-1px"><span class="abs" style="left:6px;top:5px;line-height:0"><svg width="9" height="10" viewBox="0 0 10 10" ><path fill="#fff" d="M3.5 0h3l.4 1H10v1.4H0V1h3.1zM1 3h8l-.6 7H1.6z"/><path stroke="#fff" stroke-width=".7" opacity=".0" d="M3.5 4.5v4M6.5 4.5v4"/></svg></span></span></td></tr><tr class="s"><td><span class="cb"></span></td><td>2534</td><td><span class="cj">补水防晒喷雾</span></td><td><span class="cj" style="color:#333">普通</span></td><td><span class="thumb"><svg width="30" height="30" viewBox="0 0 30 30" ><rect width="30" height="30" fill="#fff"/><rect x="7" y="2.5" width="9" height="28" fill="#f0b2c2"/><rect x="7" y="2.5" width="9" height="11" fill="#8e92d2"/><rect x="7" y="12" width="9" height="4" fill="#c4a6cf"/><rect x="7" y="25" width="9" height="4" fill="#e4e4ea"/><path d="M17 9.5c0-2 1-4 2.5-4.5 1.5.5 2.5 2.5 2.5 4.5V29h-5z" fill="#f3b8c6"/><path d="M17 9.5c0-2 1-4 2.5-4.5 1.5.5 2.5 2.5 2.5 4.5V15h-5z" fill="#8088d8"/><path d="M18 5.8c.5-.6 1-.8 1.5-.8s1 .2 1.5.8V9h-3z" fill="#5b5fdc"/></svg></span></td><td>99256</td><td>59</td><td>59</td><td>3.00</td><td><span class="cj">正常</span></td><td>2023-05-27 02:28:41</td><td>2023-05-27 02:28:41</td><td><span class="op" style="background:#18bc9c"><span class="abs" style="left:6px;top:5px;line-height:0"><svg width="10" height="10" viewBox="0 0 10.5 10.5" ><path fill="#fff" d="M8.2.3 10.2 2.3 3.3 9.2 1.3 7.2zM.9 7.8l1.9 1.9L0 10.5z"/></svg></span></span> <span class="op" style="background:#e74c3c;width:21px;margin-left:-1px"><span class="abs" style="left:6px;top:5px;line-height:0"><svg width="9" height="10" viewBox="0 0 10 10" ><path fill="#fff" d="M3.5 0h3l.4 1H10v1.4H0V1h3.1zM1 3h8l-.6 7H1.6z"/><path stroke="#fff" stroke-width=".7" opacity=".0" d="M3.5 4.5v4M6.5 4.5v4"/></svg></span></span></td></tr><tr><td><span class="cb"></span></td><td>2532</td><td><span class="cj">明星同款炫酷墨镜</span></td><td><span class="cj" style="color:#333">普通</span></td><td><span class="thumb"><svg width="30" height="30" viewBox="0 0 30 30" ><path d="M2 11.5h7l1.5 1.5h2l1-.8 6 .3 7.5 1 1 .6.7 2.5-.8.5-1-2.5-6.5-.7-.2 4.5c-.3 1.5-1.3 2.2-2.8 2.2h-3c-1.5 0-2.3-.8-2.6-2.4l-.5-3.5h-1.5l-.5 3c-.3 1.5-1.3 2.3-2.8 2.3H5c-1.5 0-2.3-.8-2.6-2.4z" fill="#2b2b2b"/></svg></span></td><td>99232</td><td>69</td><td>69</td><td>3.00</td><td><span class="cj">正常</span></td><td>2023-05-27 02:26:55</td><td>2023-05-27 02:26:55</td><td><span class="op" style="background:#18bc9c"><span class="abs" style="left:6px;top:5px;line-height:0"><svg width="10" height="10" viewBox="0 0 10.5 10.5" ><path fill="#fff" d="M8.2.3 10.2 2.3 3.3 9.2 1.3 7.2zM.9 7.8l1.9 1.9L0 10.5z"/></svg></span></span> <span class="op" style="background:#e74c3c;width:21px;margin-left:-1px"><span class="abs" style="left:6px;top:5px;line-height:0"><svg width="9" height="10" viewBox="0 0 10 10" ><path fill="#fff" d="M3.5 0h3l.4 1H10v1.4H0V1h3.1zM1 3h8l-.6 7H1.6z"/><path stroke="#fff" stroke-width=".7" opacity=".0" d="M3.5 4.5v4M6.5 4.5v4"/></svg></span></span></td></tr><tr class="s"><td><span class="cb"></span></td><td>1854</td><td><span class="cj">康普无线迷你蓝牙音响</span></td><td><span class="cj" style="color:#18bc9c">欧皇</span></td><td><span class="thumb"><svg width="30" height="30" viewBox="0 0 30 30" ><rect width="30" height="30" fill="#dde3cc"/><rect x="0" y="0" width="16" height="13" fill="#e3e8d6"/><circle cx="2.6" cy="2.6" r="1.9" fill="#f09848"/><rect x="4.5" y="1.8" width="3.5" height="1.8" fill="#444"/><path d="M16.5 7.5h8l.5 2c2 0 3 1.5 3 4v4h-1.2v-4c0-1.5-.8-2.5-1.8-2.5V25c0 1-1 1.8-2 1.8h-5.5c-1 0-1.8-.8-1.8-1.8z" fill="#9ebf98"/><rect x="17" y="7" width="7.5" height="1.5" fill="#c8d0c0"/><path d="M0 11h7.5l2 4v9H0z" fill="#e8eae6"/><path d="M0 13h6v9H0z" fill="#7c8070" opacity=".55"/><circle cx="4.5" cy="20.5" r="2.6" fill="#a8a838"/><rect x="9" y="18" width="8" height="11" fill="#f4f4ee"/><circle cx="12" cy="21.5" r="2" fill="#f0e890"/><rect x="0" y="26" width="9" height="4" fill="#e8e4c8"/></svg></span></td><td>999995</td><td>80</td><td>80</td><td>3.00</td><td><span class="cj">正常</span></td><td>2022-06-26 03:46:05</td><td>2023-05-12 16:53:27</td><td><span class="op" style="background:#18bc9c"><span class="abs" style="left:6px;top:5px;line-height:0"><svg width="10" height="10" viewBox="0 0 10.5 10.5" ><path fill="#fff" d="M8.2.3 10.2 2.3 3.3 9.2 1.3 7.2zM.9 7.8l1.9 1.9L0 10.5z"/></svg></span></span> <span class="op" style="background:#e74c3c;width:21px;margin-left:-1px"><span class="abs" style="left:6px;top:5px;line-height:0"><svg width="9" height="10" viewBox="0 0 10 10" ><path fill="#fff" d="M3.5 0h3l.4 1H10v1.4H0V1h3.1zM1 3h8l-.6 7H1.6z"/><path stroke="#fff" stroke-width=".7" opacity=".0" d="M3.5 4.5v4M6.5 4.5v4"/></svg></span></span></td></tr><tr><td><span class="cb"></span></td><td>2530</td><td><span class="cj">希尔顿防水电动牙刷</span></td><td><span class="cj" style="color:#333">普通</span></td><td><span class="thumb"><svg width="30" height="30" viewBox="0 0 30 30" ><rect x="12" y="3" width="2.2" height="9" fill="#f2f2f8"/><rect x="12.5" y="2.5" width="1.4" height="2.5" fill="#c8c4f0"/><rect x="11.5" y="12" width="3" height="17" fill="#c6c6c6"/><rect x="16.7" y="3" width="1.3" height="9" fill="#d8a8d8"/><rect x="16.7" y="2.5" width="1.3" height="2.5" fill="#b088d0"/><rect x="16" y="12" width="3" height="17" fill="#c99cc0"/><rect x="16.8" y="13" width="1.4" height="2" fill="#604050"/><rect x="21" y="3" width="1.8" height="9" fill="#b8ddf0"/><rect x="21.2" y="2.5" width="1.4" height="2.5" fill="#a8c0f0"/><rect x="20.5" y="12" width="3" height="17" fill="#5aa4d6"/><rect x="11.5" y="28.5" width="12" height="1" fill="#a08060" opacity=".6"/></svg></span></td><td>99994</td><td>89</td><td>89</td><td>3.00</td><td><span class="cj">正常</span></td><td>2023-05-27 02:25:18</td><td>2023-05-27 02:25:18</td><td><span class="op" style="background:#18bc9c"><span class="abs" style="left:6px;top:5px;line-height:0"><svg width="10" height="10" viewBox="0 0 10.5 10.5" ><path fill="#fff" d="M8.2.3 10.2 2.3 3.3 9.2 1.3 7.2zM.9 7.8l1.9 1.9L0 10.5z"/></svg></span></span> <span class="op" style="background:#e74c3c;width:21px;margin-left:-1px"><span class="abs" style="left:6px;top:5px;line-height:0"><svg width="9" height="10" viewBox="0 0 10 10" ><path fill="#fff" d="M3.5 0h3l.4 1H10v1.4H0V1h3.1zM1 3h8l-.6 7H1.6z"/><path stroke="#fff" stroke-width=".7" opacity=".0" d="M3.5 4.5v4M6.5 4.5v4"/></svg></span></span></td></tr><tr class="s"><td><span class="cb"></span></td><td>2533</td><td><span class="cj">积雪草氨基酸洁面乳</span></td><td><span class="cj" style="color:#333">普通</span></td><td><span class="thumb"><svg width="30" height="30" viewBox="0 0 30 30" ><rect width="30" height="30" fill="#fff"/><path d="M10 2.5h10.5l-.5 8.5h-9.5z" fill="#1e8a58"/><rect x="13" y="6" width="4" height="1.5" fill="#8fc8a8"/><path d="M10.5 11h9.5l-1.3 17.5h-7z" fill="#f8faf8"/><rect x="12" y="12.5" width="6.5" height="2.2" fill="#3c9a60"/><rect x="13.5" y="18" width="3" height="4" fill="#70b890"/><rect x="13" y="25" width="4" height="4" fill="#e6e6e6"/></svg></span></td><td>99250</td><td>89</td><td>89</td><td>3.00</td><td><span class="cj">正常</span></td><td>2023-05-27 02:28:00</td><td>2023-05-27 02:28:00</td><td><span class="op" style="background:#18bc9c"><span class="abs" style="left:6px;top:5px;line-height:0"><svg width="10" height="10" viewBox="0 0 10.5 10.5" ><path fill="#fff" d="M8.2.3 10.2 2.3 3.3 9.2 1.3 7.2zM.9 7.8l1.9 1.9L0 10.5z"/></svg></span></span> <span class="op" style="background:#e74c3c;width:21px;margin-left:-1px"><span class="abs" style="left:6px;top:5px;line-height:0"><svg width="9" height="10" viewBox="0 0 10 10" ><path fill="#fff" d="M3.5 0h3l.4 1H10v1.4H0V1h3.1zM1 3h8l-.6 7H1.6z"/><path stroke="#fff" stroke-width=".7" opacity=".0" d="M3.5 4.5v4M6.5 4.5v4"/></svg></span></span></td></tr><tr><td><span class="cb"></span></td><td>2545</td><td><span class="cj">希尔顿电动牙刷</span></td><td><span class="cj" style="color:#333">普通</span></td><td><span class="thumb"><svg width="30" height="30" viewBox="0 0 30 30" ><rect x="12" y="3" width="2.2" height="9" fill="#f2f2f8"/><rect x="12.5" y="2.5" width="1.4" height="2.5" fill="#c8c4f0"/><rect x="11.5" y="12" width="3" height="17" fill="#c6c6c6"/><rect x="16.7" y="3" width="1.3" height="9" fill="#d8a8d8"/><rect x="16.7" y="2.5" width="1.3" height="2.5" fill="#b088d0"/><rect x="16" y="12" width="3" height="17" fill="#c99cc0"/><rect x="16.8" y="13" width="1.4" height="2" fill="#604050"/><rect x="21" y="3" width="1.8" height="9" fill="#b8ddf0"/><rect x="21.2" y="2.5" width="1.4" height="2.5" fill="#a8c0f0"/><rect x="20.5" y="12" width="3" height="17" fill="#5aa4d6"/><rect x="11.5" y="28.5" width="12" height="1" fill="#a08060" opacity=".6"/></svg></span></td><td>99224</td><td>89</td><td>89</td><td>5.00</td><td><span class="cj">正常</span></td><td>2023-05-27 02:40:04</td><td>2023-05-27 02:40:04</td><td><span class="op" style="background:#18bc9c"><span class="abs" style="left:6px;top:5px;line-height:0"><svg width="10" height="10" viewBox="0 0 10.5 10.5" ><path fill="#fff" d="M8.2.3 10.2 2.3 3.3 9.2 1.3 7.2zM.9 7.8l1.9 1.9L0 10.5z"/></svg></span></span> <span class="op" style="background:#e74c3c;width:21px;margin-left:-1px"><span class="abs" style="left:6px;top:5px;line-height:0"><svg width="9" height="10" viewBox="0 0 10 10" ><path fill="#fff" d="M3.5 0h3l.4 1H10v1.4H0V1h3.1zM1 3h8l-.6 7H1.6z"/><path stroke="#fff" stroke-width=".7" opacity=".0" d="M3.5 4.5v4M6.5 4.5v4"/></svg></span></span></td></tr></table></div></div><div id="hdsh"></div><div class="sbar" style="left:1838px;top:50px;height:877px"><div class="abs" style="left:4px;top:6.5px;width:0;height:0;border-left:4.5px solid transparent;border-right:4.5px solid transparent;border-bottom:5px solid #a3a3a3"></div><div class="sthumb" style="top:17px;height:549px"></div><div class="abs" style="left:4px;top:866px;width:0;height:0;border-left:4.5px solid transparent;border-right:4.5px solid transparent;border-top:5px solid #505050"></div></div><div class="sbar" style="left:1855px;top:0;height:927px"><div class="abs" style="left:4px;top:6.5px;width:0;height:0;border-left:4.5px solid transparent;border-right:4.5px solid transparent;border-bottom:5px solid #a3a3a3"></div><div class="sthumb" style="top:17px;height:875px"></div><div class="abs" style="left:4px;top:916px;width:0;height:0;border-left:4.5px solid transparent;border-right:4.5px solid transparent;border-top:5px solid #505050"></div></div></body></html>
